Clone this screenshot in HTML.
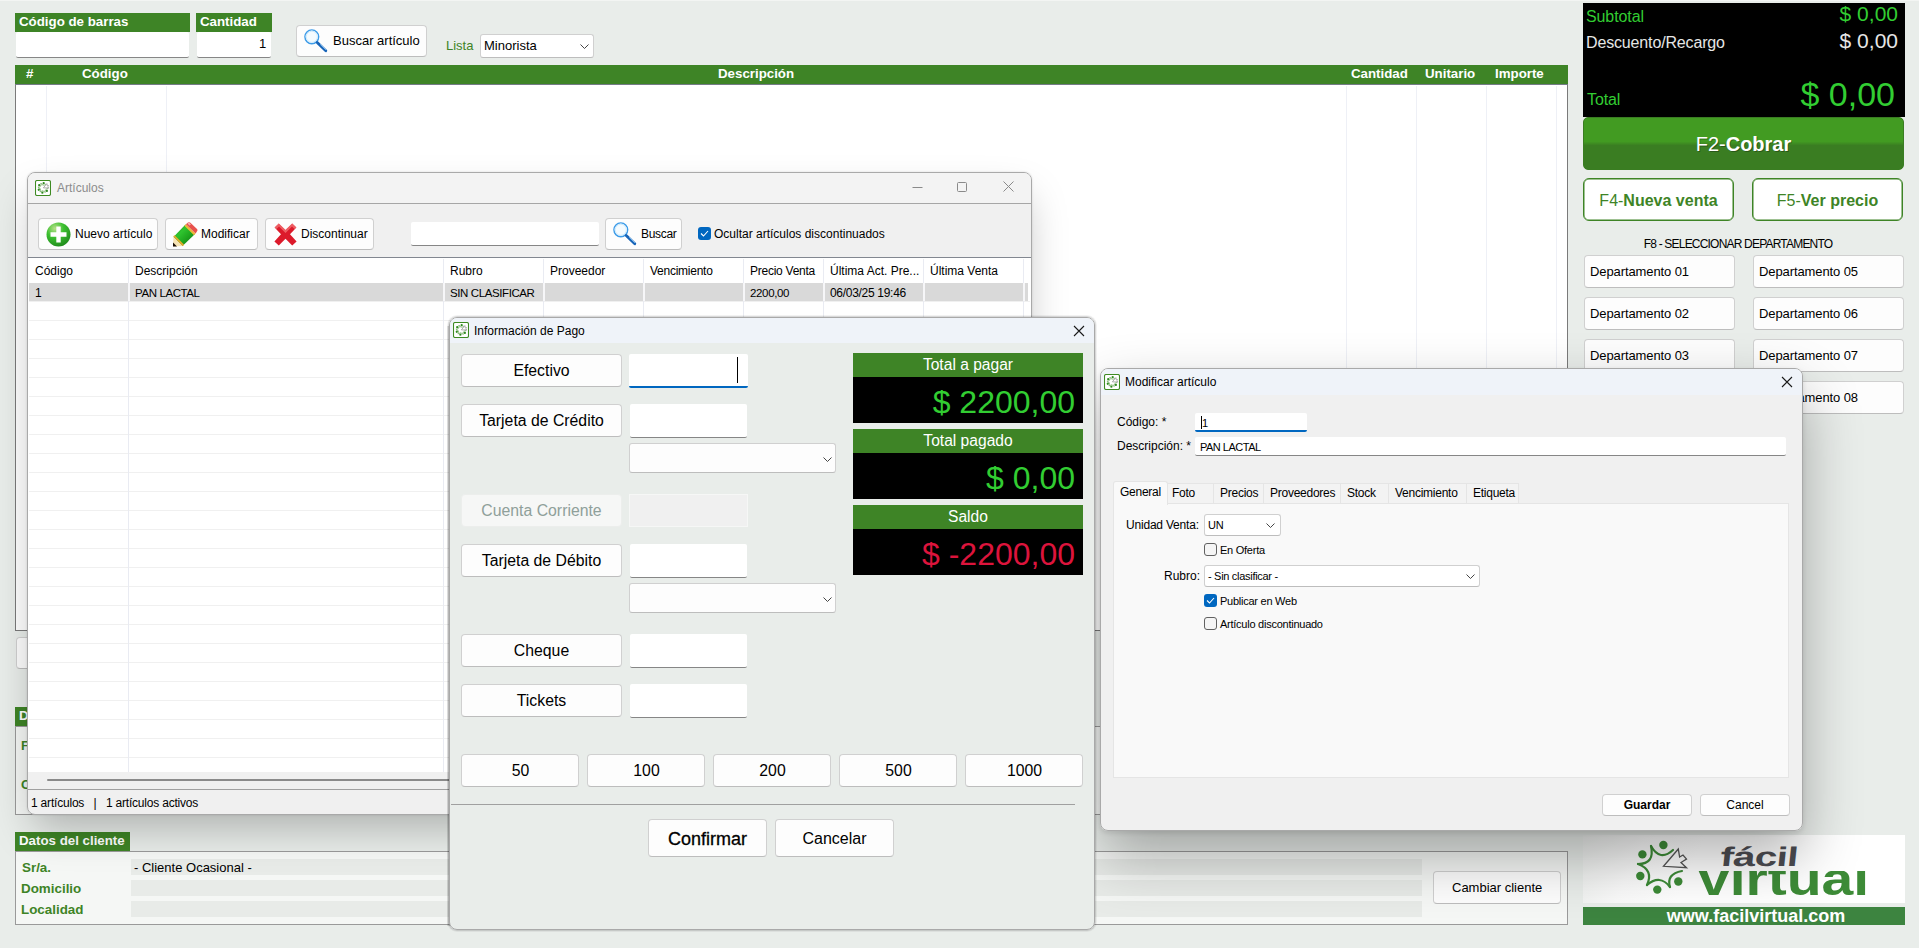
<!DOCTYPE html>
<html lang="es">
<head>
<meta charset="utf-8">
<title>Fácil Virtual - Punto de venta</title>
<style>
*{box-sizing:border-box;margin:0;padding:0}
html,body{width:1919px;height:948px;overflow:hidden}
body{position:relative;background:#e9edea;font-family:"Liberation Sans",Arial,sans-serif;font-size:12px;color:#000}
.abs{position:absolute}
.g{background:#3e8426;color:#fff;font-weight:bold}
.lbl{position:absolute;background:#3e8426;color:#fff;font-weight:bold;font-size:13.3px;line-height:17px;padding-left:4px;white-space:nowrap}
.inp{position:absolute;background:#fff;border-bottom:1px solid #868686;border-radius:2px}
.btn{position:absolute;background:#fdfdfd;border:1px solid #d0d0d0;border-bottom-color:#bdbdbd;border-radius:4px;white-space:nowrap;text-align:center}
.t{position:absolute;white-space:nowrap}
.win{position:absolute;border:1px solid #a9a9a9;border-radius:8px;overflow:hidden}
.shadow{position:absolute;border-radius:8px}
.vline{position:absolute;width:1px;background:#eef0f6}
.chev{position:absolute;width:9px;height:5px}
</style>
</head>
<body>
<!-- ================= MAIN WINDOW ================= -->
<div class="abs" style="left:0;top:0;width:1919px;height:1px;background:#f3f5f3"></div>

<div class="lbl" style="left:15px;top:13px;width:175px;height:19px">Código de barras</div>
<div class="inp" style="left:16px;top:32px;width:173px;height:26px"></div>
<div class="lbl" style="left:196px;top:13px;width:76px;height:19px">Cantidad</div>
<div class="inp" style="left:197px;top:32px;width:74px;height:26px"></div>
<div class="t" style="left:259px;top:36px;font-size:13px;line-height:15px">1</div>

<div class="btn" style="left:296px;top:25px;width:131px;height:32px"></div>
<svg class="abs" style="left:303px;top:28px" width="26" height="26" viewBox="0 0 26 26"><circle cx="8.8" cy="8.8" r="6.9" fill="#f4fbff" stroke="#3c9be8" stroke-width="1.4"/><circle cx="8.8" cy="8.8" r="5.6" fill="none" stroke="#cdeafc" stroke-width="1"/><path d="M14.2 14.4 L22.8 22.8" stroke="#1764b8" stroke-width="2.8" stroke-linecap="round"/><path d="M17.5 16.6 L22.6 21.6" stroke="#8cc4f2" stroke-width="0.9" stroke-linecap="round"/></svg>
<div class="t" style="left:333px;top:33px;font-size:13px;line-height:16px">Buscar artículo</div>

<div class="t" style="left:446px;top:38px;font-size:13px;line-height:16px;color:#3e8426">Lista</div>
<div class="btn" style="left:480px;top:34px;width:114px;height:24px;border-radius:3px;background:#fff"></div>
<div class="t" style="left:484px;top:38px;font-size:13px;line-height:16px">Minorista</div>
<svg class="chev" style="left:580px;top:44px" viewBox="0 0 9 5"><path d="M0.5 0.5 L4.5 4.5 L8.5 0.5" fill="none" stroke="#444" stroke-width="1"/></svg>

<!-- sales grid -->
<div class="abs" style="left:15px;top:65px;width:1553px;height:566px;background:#fff;border:1px solid #7a7a7a"></div>
<div class="abs g" style="left:15px;top:65px;width:1553px;height:20px;font-size:13.3px;line-height:18px">
  <span class="t" style="left:11px;top:0">#</span>
  <span class="t" style="left:67px;top:0">Código</span>
  <span class="t" style="left:703px;top:0">Descripción</span>
  <span class="t" style="left:1336px;top:0">Cantidad</span>
  <span class="t" style="left:1410px;top:0">Unitario</span>
  <span class="t" style="left:1480px;top:0">Importe</span>
</div>
<div class="abs" style="left:15px;top:84px;width:1553px;height:1px;background:#747b86"></div>
<div class="vline" style="left:46px;top:86px;height:544px"></div>
<div class="vline" style="left:166px;top:86px;height:544px"></div>
<div class="vline" style="left:1346px;top:86px;height:544px"></div>
<div class="vline" style="left:1416px;top:86px;height:544px"></div>
<div class="vline" style="left:1486px;top:86px;height:544px"></div>
<div class="vline" style="left:1556px;top:86px;height:544px"></div>

<!-- hidden-behind bits at left -->
<div class="btn" style="left:16px;top:637px;width:120px;height:32px"></div>
<div class="lbl" style="left:15px;top:707px;width:130px;height:19px">Datos</div>
<div class="abs" style="left:15px;top:726px;width:1553px;height:89px;background:#f5f7f5;border:1px solid #9a9a9a"></div>
<div class="t" style="left:21px;top:738px;font-size:13px;font-weight:bold;color:#3e8426">Fecha</div>
<div class="t" style="left:21px;top:777px;font-size:13px;font-weight:bold;color:#3e8426">Cajero</div>

<!-- Datos del cliente -->
<div class="lbl" style="left:15px;top:832px;width:115px;height:19px">Datos del cliente</div>
<div class="abs" style="left:15px;top:851px;width:1553px;height:74px;background:#f5f7f5;border:1px solid #9a9a9a"></div>
<div class="abs" style="left:131px;top:859px;width:1291px;height:16px;background:#e8ebe8"></div>
<div class="abs" style="left:131px;top:880px;width:1291px;height:16px;background:#e8ebe8"></div>
<div class="abs" style="left:131px;top:901px;width:1291px;height:16px;background:#e8ebe8"></div>
<div class="t" style="left:22px;top:860px;font-size:13.4px;font-weight:bold;color:#3e8426;line-height:16px">Sr/a.</div>
<div class="t" style="left:21px;top:881px;font-size:13.4px;font-weight:bold;color:#3e8426;line-height:16px">Domicilio</div>
<div class="t" style="left:21px;top:902px;font-size:13.4px;font-weight:bold;color:#3e8426;line-height:16px">Localidad</div>
<div class="t" style="left:134px;top:860px;font-size:13px;line-height:16px">- Cliente Ocasional -</div>
<div class="btn" style="left:1433px;top:871px;width:128px;height:33px"></div>
<div class="t" style="left:1452px;top:880px;font-size:13px;line-height:16px">Cambiar cliente</div>

<!-- RIGHT COLUMN -->
<div class="abs" style="left:1583px;top:3px;width:322px;height:114px;background:#000"></div>
<div class="t" style="left:1586px;top:8px;font-size:16px;line-height:18px;color:#32cd32;letter-spacing:-0.1px">Subtotal</div>
<div class="t" style="right:21px;top:3px;font-size:21px;line-height:22px;color:#32cd32">$ 0,00</div>
<div class="t" style="left:1586px;top:34px;font-size:16px;line-height:18px;color:#e6e6e6;letter-spacing:-0.15px">Descuento/Recargo</div>
<div class="t" style="right:21px;top:30px;font-size:21px;line-height:22px;color:#e6e6e6">$ 0,00</div>
<div class="t" style="left:1587px;top:91px;font-size:16px;line-height:18px;color:#32cd32;letter-spacing:-0.1px">Total</div>
<div class="t" style="right:24px;top:76px;font-size:34px;line-height:36px;color:#32cd32">$ 0,00</div>

<div class="abs" style="left:1583px;top:117px;width:321px;height:53px;border-radius:5px;background:linear-gradient(#429b22 0,#429b22 46%,#3a7d22 54%,#3a7d22 100%);border:1px solid #3a7d22"></div>
<div class="t" style="left:1583px;top:132px;width:321px;text-align:center;font-size:20px;line-height:24px;color:#fff;text-shadow:1px 1px 0 rgba(0,0,0,.3)">F2-<b>Cobrar</b></div>

<div class="abs" style="left:1583px;top:178px;width:151px;height:43px;border-radius:6px;background:#fff;border:1px solid #3e8426;box-shadow:inset 0 0 0 .5px #3e8426"></div>
<div class="t" style="left:1583px;top:191px;width:151px;text-align:center;font-size:16px;line-height:20px;color:#3e8426">F4-<b>Nueva venta</b></div>
<div class="abs" style="left:1752px;top:178px;width:151px;height:43px;border-radius:6px;background:#fff;border:1px solid #3e8426;box-shadow:inset 0 0 0 .5px #3e8426"></div>
<div class="t" style="left:1752px;top:191px;width:151px;text-align:center;font-size:16px;line-height:20px;color:#3e8426">F5-<b>Ver precio</b></div>

<div class="t" style="left:1583px;top:237px;width:310px;text-align:center;font-size:12px;line-height:14px;letter-spacing:-0.8px">F8 - SELECCIONAR DEPARTAMENTO</div>

<div class="btn" style="left:1584px;top:255px;width:151px;height:33px"></div><div class="t" style="left:1590px;top:264px;font-size:13px;line-height:16px;letter-spacing:-0.1px">Departamento 01</div>
<div class="btn" style="left:1753px;top:255px;width:151px;height:33px"></div><div class="t" style="left:1759px;top:264px;font-size:13px;line-height:16px;letter-spacing:-0.1px">Departamento 05</div>
<div class="btn" style="left:1584px;top:297px;width:151px;height:33px"></div><div class="t" style="left:1590px;top:306px;font-size:13px;line-height:16px;letter-spacing:-0.1px">Departamento 02</div>
<div class="btn" style="left:1753px;top:297px;width:151px;height:33px"></div><div class="t" style="left:1759px;top:306px;font-size:13px;line-height:16px;letter-spacing:-0.1px">Departamento 06</div>
<div class="btn" style="left:1584px;top:339px;width:151px;height:33px"></div><div class="t" style="left:1590px;top:348px;font-size:13px;line-height:16px;letter-spacing:-0.1px">Departamento 03</div>
<div class="btn" style="left:1753px;top:339px;width:151px;height:33px"></div><div class="t" style="left:1759px;top:348px;font-size:13px;line-height:16px;letter-spacing:-0.1px">Departamento 07</div>
<div class="btn" style="left:1584px;top:381px;width:151px;height:33px"></div><div class="t" style="left:1590px;top:390px;font-size:13px;line-height:16px;letter-spacing:-0.1px">Departamento 04</div>
<div class="btn" style="left:1753px;top:381px;width:151px;height:33px"></div><div class="t" style="left:1759px;top:390px;font-size:13px;line-height:16px;letter-spacing:-0.1px">Departamento 08</div>
<!-- logo -->
<div class="abs" style="left:1583px;top:835px;width:322px;height:68px;background:linear-gradient(115deg,#eceeec 0,#fafafa 18%,#fff 35%)"></div>
<svg class="abs" style="left:1630px;top:838px" width="62" height="60" viewBox="0 0 62 60">
 <g fill="#3d8b37"><circle cx="33.4" cy="7" r="4.2"/><circle cx="12.4" cy="16.4" r="4.2"/><circle cx="10.3" cy="38" r="4.2"/><circle cx="27.3" cy="51.6" r="4.2"/><circle cx="48.3" cy="43.5" r="4.2"/></g>
 <g fill="none" stroke="#3d8b37" stroke-width="2.2" stroke-linecap="round" stroke-linejoin="round">
  <path d="M21 8 Q30 24 43 12"/><path d="M21 8 Q25 26 8 26"/><path d="M8 26 Q24 32 17 47"/><path d="M17 47 Q30 36 40 49"/><path d="M40 49 Q36 36 52 33"/>
 </g>
 <path d="M48.3 11 L33.5 28.3 L56.5 29.7 L51 24.5 L56.5 21 L53 17 L49.6 19 Z" fill="#fff" stroke="#555" stroke-width="1.3" stroke-linejoin="miter"/>
</svg>
<div class="t" style="left:1722px;top:843px;font-size:27px;line-height:28px;font-weight:bold;color:#4d4d52;transform-origin:0 0;transform:scaleX(1.5) skewX(-4deg);letter-spacing:-0.5px">fácil</div>
<div class="abs" style="left:1698px;top:871px;width:175px;height:25px;overflow:hidden"><div class="t" style="left:0;top:-18px;font-size:46px;line-height:52px;font-weight:bold;color:#3d8b37;transform-origin:0 0;transform:scaleX(1.24)">virtual</div></div>
<div class="abs" style="left:1583px;top:907px;width:322px;height:18px;background:#3d8440"></div>
<div class="t" style="left:1595px;top:907px;width:322px;text-align:center;font-size:18px;font-weight:bold;line-height:19px;color:#fff">www.facilvirtual.com</div>


<!-- ================= ARTICULOS WINDOW ================= -->
<div class="shadow" style="left:27px;top:172px;width:1005px;height:643px;box-shadow:0 20px 40px -6px rgba(0,0,0,.25),0 0 2px rgba(0,0,0,.16)"></div>
<div class="win" style="left:27px;top:172px;width:1005px;height:643px;background:#f0f0f0">
  <div class="abs" style="left:0;top:0;width:1003px;height:31px;background:#f3f3f3;border-bottom:1px solid #a6a6a6"></div>
  <svg class="abs" style="left:7px;top:7px" width="16" height="16" viewBox="0 0 16 16"><rect x="0.5" y="0.5" width="15" height="15" rx="1.6" fill="#fff" stroke="#3e8a22" stroke-width="1.1"/><g transform="translate(1.6,1.7) scale(0.212)"><g fill="#2f8a1f"><circle cx="33.4" cy="7" r="5.4"/><circle cx="12.4" cy="16.4" r="5.4"/><circle cx="10.3" cy="38" r="5.4"/><circle cx="27.3" cy="51.6" r="5.4"/><circle cx="48.3" cy="43.5" r="5.4"/></g><g fill="none" stroke="#4f9a3a" stroke-width="4" stroke-linecap="round" opacity=".75"><path d="M21 8 Q30 24 43 12"/><path d="M21 8 Q25 26 8 26"/><path d="M8 26 Q24 32 17 47"/><path d="M17 47 Q30 36 40 49"/><path d="M40 49 Q36 36 52 33"/></g><path d="M48.3 9 L32 29 L58 30 L52 24.5 L57 20 L53 16 L49.6 18 Z" fill="#fff" stroke="#8c8c8c" stroke-width="3.4"/></g></svg>
  <div class="t" style="left:29px;top:8px;font-size:12px;line-height:14px;color:#8c8c8c">Artículos</div>
  <svg class="abs" style="left:884px;top:8px" width="104" height="12" viewBox="0 0 104 12" fill="none" stroke="#8a8a8a" stroke-width="1"><path d="M0.5 6.5 H10.5"/><rect x="45.5" y="1.5" width="9" height="9" rx="1"/><path d="M91.5 0.5 L101.5 10.5 M101.5 0.5 L91.5 10.5"/></svg>

  <!-- toolbar -->
  <div class="btn" style="left:10px;top:45px;width:120px;height:32px"></div>
  <svg class="abs" style="left:18px;top:49px" width="25" height="25" viewBox="0 0 25 25"><defs><radialGradient id="pg" cx="35%" cy="25%" r="80%"><stop offset="0" stop-color="#b8e08a"/><stop offset=".45" stop-color="#3cc030"/><stop offset="1" stop-color="#1f8a1c"/></radialGradient></defs><circle cx="12.5" cy="12.5" r="12" fill="url(#pg)"/><path d="M10.3 4.5h4.4v5.8h5.8v4.4h-5.8v5.8h-4.4v-5.8H4.5v-4.4h5.8z" fill="#fff"/></svg>
  <div class="t" style="left:47px;top:54px;line-height:14px">Nuevo artículo</div>

  <div class="btn" style="left:137px;top:45px;width:93px;height:32px"></div>
  <svg class="abs" style="left:145px;top:49px" width="25" height="25" viewBox="0 0 25 25"><defs><linearGradient id="pb" x1="0" y1="0" x2="1" y2="1"><stop offset="0" stop-color="#0d7a10"/><stop offset=".35" stop-color="#2fc42f"/><stop offset=".6" stop-color="#1fa81f"/><stop offset="1" stop-color="#0b6a0e"/></linearGradient></defs><path d="M0.5 15 L12.5 2.6 L22 12 L9.5 24 Z" fill="url(#pb)"/><path d="M0.5 15 L9.5 24 L0 24.6 Z" fill="#f6e3b4"/><path d="M0.2 14.2 L1.6 13.2 L11 22.6 L9.8 24.2 Z" fill="#e3a92c"/><path d="M0 24.6 L0 20.6 L4 24.4 Z" fill="#1a0d04"/><path d="M11.3 3.8 L12.9 2.2 L22.6 11.6 L21 13.2 Z" fill="#eab73a"/><path d="M12.9 2.2 L15 0.5 Q16.2 -0.3 17.4 0.7 L24 7 Q24.8 8 24.2 9 L22.6 11.6 Z" fill="#e8514c"/><path d="M14.5 1.6 L16 0.6 L18 2.4 L16.4 3.4Z" fill="#f2b0b0"/></svg>
  <div class="t" style="left:173px;top:54px;line-height:14px">Modificar</div>

  <div class="btn" style="left:237px;top:45px;width:109px;height:32px"></div>
  <svg class="abs" style="left:246px;top:50px" width="23" height="23" viewBox="0 0 23 23"><path d="M0.6 4.4 L4.8 0.4 L11.5 7 L18.2 0.4 L22.4 4.4 L16 11.3 L22.6 18.4 L18.2 22.6 L11.5 15.8 L4.8 22.6 L0.4 18.4 L7 11.3 Z" fill="#dc1a2b"/><path d="M0.6 4.4 L4.8 0.4 L11.5 7 L18.2 0.4 L22.4 4.4 L20.5 6 L18 3.4 L11.5 10 L5 3.4 L2.6 6Z" fill="#f57a7a" opacity=".7"/></svg>
  <div class="t" style="left:273px;top:54px;line-height:14px">Discontinuar</div>

  <div class="inp" style="left:383px;top:49px;width:188px;height:24px"></div>
  <div class="btn" style="left:577px;top:45px;width:77px;height:32px"></div>
  <svg class="abs" style="left:584px;top:48px" width="26" height="26" viewBox="0 0 26 26"><circle cx="8.8" cy="8.8" r="6.9" fill="#f4fbff" stroke="#3c9be8" stroke-width="1.4"/><circle cx="8.8" cy="8.8" r="5.6" fill="none" stroke="#cdeafc" stroke-width="1"/><path d="M14.2 14.4 L22.8 22.8" stroke="#1764b8" stroke-width="2.8" stroke-linecap="round"/><path d="M17.5 16.6 L22.6 21.6" stroke="#8cc4f2" stroke-width="0.9" stroke-linecap="round"/></svg>
  <div class="t" style="left:613px;top:54px;line-height:14px;letter-spacing:-0.3px">Buscar</div>
  <div class="abs" style="left:670px;top:54px;width:13px;height:13px;border-radius:3px;background:#0067c0"></div>
  <svg class="abs" style="left:672px;top:57px" width="9" height="7" viewBox="0 0 9 7"><path d="M1 3.5 L3.5 6 L8 1" fill="none" stroke="#fff" stroke-width="1.1"/></svg>
  <div class="t" style="left:686px;top:54px;line-height:14px">Ocultar artículos discontinuados</div>

  <!-- grid -->
  <div class="abs" id="agrid" style="left:0;top:84px;width:1003px;height:532px;background:#fff;border-top:1px solid #828790">
    <div class="abs" style="left:1px;top:25px;width:999px;height:18px;background:#d9d9d9"></div>
    <div class="abs" style="left:1px;top:43px;width:1001px;height:1px;background:#f0f0f0"></div>
    <div class="abs" style="left:1px;top:62px;width:1001px;height:1px;background:#f0f0f0"></div>
    <div class="abs" style="left:1px;top:81px;width:1001px;height:1px;background:#f0f0f0"></div>
    <div class="abs" style="left:1px;top:100px;width:1001px;height:1px;background:#f0f0f0"></div>
    <div class="abs" style="left:1px;top:119px;width:1001px;height:1px;background:#f0f0f0"></div>
    <div class="abs" style="left:1px;top:138px;width:1001px;height:1px;background:#f0f0f0"></div>
    <div class="abs" style="left:1px;top:157px;width:1001px;height:1px;background:#f0f0f0"></div>
    <div class="abs" style="left:1px;top:176px;width:1001px;height:1px;background:#f0f0f0"></div>
    <div class="abs" style="left:1px;top:195px;width:1001px;height:1px;background:#f0f0f0"></div>
    <div class="abs" style="left:1px;top:214px;width:1001px;height:1px;background:#f0f0f0"></div>
    <div class="abs" style="left:1px;top:233px;width:1001px;height:1px;background:#f0f0f0"></div>
    <div class="abs" style="left:1px;top:252px;width:1001px;height:1px;background:#f0f0f0"></div>
    <div class="abs" style="left:1px;top:271px;width:1001px;height:1px;background:#f0f0f0"></div>
    <div class="abs" style="left:1px;top:290px;width:1001px;height:1px;background:#f0f0f0"></div>
    <div class="abs" style="left:1px;top:309px;width:1001px;height:1px;background:#f0f0f0"></div>
    <div class="abs" style="left:1px;top:328px;width:1001px;height:1px;background:#f0f0f0"></div>
    <div class="abs" style="left:1px;top:347px;width:1001px;height:1px;background:#f0f0f0"></div>
    <div class="abs" style="left:1px;top:366px;width:1001px;height:1px;background:#f0f0f0"></div>
    <div class="abs" style="left:1px;top:385px;width:1001px;height:1px;background:#f0f0f0"></div>
    <div class="abs" style="left:1px;top:404px;width:1001px;height:1px;background:#f0f0f0"></div>
    <div class="abs" style="left:1px;top:423px;width:1001px;height:1px;background:#f0f0f0"></div>
    <div class="abs" style="left:1px;top:442px;width:1001px;height:1px;background:#f0f0f0"></div>
    <div class="abs" style="left:1px;top:461px;width:1001px;height:1px;background:#f0f0f0"></div>
    <div class="abs" style="left:1px;top:480px;width:1001px;height:1px;background:#f0f0f0"></div>
    <div class="abs" style="left:1px;top:499px;width:1001px;height:1px;background:#f0f0f0"></div>
    <div class="abs" style="left:1px;top:518px;width:1001px;height:1px;background:#f0f0f0"></div>
    <div class="abs" style="left:1px;top:537px;width:1001px;height:1px;background:#f0f0f0"></div>
    <div class="abs" style="left:100px;top:1px;width:1px;height:513px;background:#e9ebf2"></div>
    <div class="abs" style="left:415px;top:1px;width:1px;height:513px;background:#e9ebf2"></div>
    <div class="abs" style="left:515px;top:1px;width:1px;height:513px;background:#e9ebf2"></div>
    <div class="abs" style="left:615px;top:1px;width:1px;height:513px;background:#e9ebf2"></div>
    <div class="abs" style="left:715px;top:1px;width:1px;height:513px;background:#e9ebf2"></div>
    <div class="abs" style="left:795px;top:1px;width:1px;height:513px;background:#e9ebf2"></div>
    <div class="abs" style="left:895px;top:1px;width:1px;height:513px;background:#e9ebf2"></div>
    <div class="abs" style="left:995px;top:1px;width:1px;height:513px;background:#e9ebf2"></div>
    <div class="abs" style="left:100px;top:25px;width:2px;height:18px;background:#f6f6f8"></div><div class="abs" style="left:415px;top:25px;width:2px;height:18px;background:#f6f6f8"></div><div class="abs" style="left:515px;top:25px;width:2px;height:18px;background:#f6f6f8"></div><div class="abs" style="left:615px;top:25px;width:2px;height:18px;background:#f6f6f8"></div><div class="abs" style="left:715px;top:25px;width:2px;height:18px;background:#f6f6f8"></div><div class="abs" style="left:795px;top:25px;width:2px;height:18px;background:#f6f6f8"></div><div class="abs" style="left:895px;top:25px;width:2px;height:18px;background:#f6f6f8"></div><div class="abs" style="left:995px;top:25px;width:2px;height:18px;background:#f6f6f8"></div>
    <div class="t" style="left:7px;top:6px;line-height:14px">Código</div>
    <div class="t" style="left:107px;top:6px;line-height:14px">Descripción</div>
    <div class="t" style="left:422px;top:6px;line-height:14px">Rubro</div>
    <div class="t" style="left:522px;top:6px;line-height:14px">Proveedor</div>
    <div class="t" style="left:622px;top:6px;line-height:14px;letter-spacing:-0.25px">Vencimiento</div>
    <div class="t" style="left:722px;top:6px;line-height:14px;letter-spacing:-0.25px">Precio Venta</div>
    <div class="t" style="left:802px;top:6px;line-height:14px">Última Act. Pre...</div>
    <div class="t" style="left:902px;top:6px;line-height:14px">Última Venta</div>
    <div class="t" style="left:7px;top:28px;line-height:14px">1</div>
    <div class="t" style="left:107px;top:28px;line-height:14px;font-size:11.5px;letter-spacing:-0.4px">PAN LACTAL</div>
    <div class="t" style="left:422px;top:28px;line-height:14px;font-size:11.5px;letter-spacing:-0.4px">SIN CLASIFICAR</div>
    <div class="t" style="left:722px;top:28px;line-height:14px;font-size:11.5px;letter-spacing:-0.35px">2200,00</div>
    <div class="t" style="left:802px;top:28px;line-height:14px;letter-spacing:-0.3px">06/03/25 19:46</div>
  </div>
  <div class="abs" style="left:0;top:599px;width:1003px;height:18px;background:#f0f0f0"></div>
  <div class="abs" style="left:19px;top:606px;width:984px;height:2px;background:#8a8a8a;border-radius:1px"></div>
  <div class="abs" style="left:0;top:616px;width:1003px;height:1px;background:#a0a0a0"></div>
  <div class="t" style="left:3px;top:623px;line-height:14px;letter-spacing:-0.2px">1 artículos&nbsp;&nbsp;&nbsp;|&nbsp;&nbsp;&nbsp;1 artículos activos</div>
</div>

<!-- ================= MODIFICAR ARTICULO WINDOW ================= -->
<div class="shadow" style="left:449px;top:317px;width:646px;height:613px;box-shadow:0 0 0 1px rgba(0,0,0,.10),0 0 0 2px rgba(0,0,0,.05)"></div>
<div class="abs" style="left:447px;top:326px;width:3px;height:600px;background:linear-gradient(to right,rgba(0,0,0,.06),rgba(0,0,0,.26))"></div>
<div class="shadow" style="left:1100px;top:368px;width:703px;height:463px;box-shadow:0 26px 58px rgba(0,0,0,.31),0 2px 5px rgba(0,0,0,.10)"></div>
<div class="win" style="left:1100px;top:368px;width:703px;height:463px;background:#f0f0f0">
  <div class="abs" style="left:0;top:0;width:701px;height:26px;background:#eff3f9"></div>
  <svg class="abs" style="left:3px;top:5px" width="16" height="16" viewBox="0 0 16 16"><rect x="0.5" y="0.5" width="15" height="15" rx="1.6" fill="#fff" stroke="#3e8a22" stroke-width="1.1"/><g transform="translate(1.6,1.7) scale(0.212)"><g fill="#2f8a1f"><circle cx="33.4" cy="7" r="5.4"/><circle cx="12.4" cy="16.4" r="5.4"/><circle cx="10.3" cy="38" r="5.4"/><circle cx="27.3" cy="51.6" r="5.4"/><circle cx="48.3" cy="43.5" r="5.4"/></g><g fill="none" stroke="#4f9a3a" stroke-width="4" stroke-linecap="round" opacity=".75"><path d="M21 8 Q30 24 43 12"/><path d="M21 8 Q25 26 8 26"/><path d="M8 26 Q24 32 17 47"/><path d="M17 47 Q30 36 40 49"/><path d="M40 49 Q36 36 52 33"/></g><path d="M48.3 9 L32 29 L58 30 L52 24.5 L57 20 L53 16 L49.6 18 Z" fill="#fff" stroke="#8c8c8c" stroke-width="3.4"/></g></svg>
  <div class="t" style="left:24px;top:6px;line-height:14px">Modificar artículo</div>
  <svg class="abs" style="left:680px;top:7px" width="12" height="12" viewBox="0 0 12 12" fill="none" stroke="#1a1a1a" stroke-width="1.1"><path d="M1 1 L11 11 M11 1 L1 11"/></svg>

  <div class="t" style="left:16px;top:46px;line-height:14px">Código: *</div>
  <div class="abs" style="left:94px;top:44px;width:112px;height:19px;background:#fff;border-bottom:2px solid #0067c0;border-radius:2px"></div>
  <div class="abs" style="left:100px;top:47px;width:1px;height:13px;background:#000"></div>
  <div class="t" style="left:101px;top:47px;line-height:14px;font-size:11px">1</div>
  <div class="t" style="left:16px;top:70px;line-height:14px">Descripción: *</div>
  <div class="inp" style="left:94px;top:68px;width:591px;height:19px"></div>
  <div class="t" style="left:99px;top:71px;line-height:14px;font-size:11px;letter-spacing:-0.5px">PAN LACTAL</div>

  <!-- tabs -->
  <div class="abs" style="left:12px;top:134px;width:676px;height:275px;background:#f9f9f9;border:1px solid #e5e5e5"></div>
  <div class="abs" style="left:66px;top:114px;width:352px;height:20px;background:#f3f3f3;border:1px solid #e5e5e5;border-bottom:none"></div>
  <div class="abs" style="left:112px;top:115px;width:1px;height:19px;background:#e5e5e5"></div><div class="abs" style="left:162px;top:115px;width:1px;height:19px;background:#e5e5e5"></div><div class="abs" style="left:239px;top:115px;width:1px;height:19px;background:#e5e5e5"></div><div class="abs" style="left:287px;top:115px;width:1px;height:19px;background:#e5e5e5"></div><div class="abs" style="left:365px;top:115px;width:1px;height:19px;background:#e5e5e5"></div>
  <div class="abs" style="left:12px;top:112px;width:55px;height:24px;background:#f9f9f9;border:1px solid #e5e5e5;border-bottom:none;border-radius:3px 3px 0 0"></div>
  <div class="t" style="left:19px;top:116px;line-height:14px;letter-spacing:-0.25px">General</div>
  <div class="t" style="left:71px;top:117px;line-height:14px;letter-spacing:-0.25px">Foto</div>
  <div class="t" style="left:119px;top:117px;line-height:14px;letter-spacing:-0.25px">Precios</div>
  <div class="t" style="left:169px;top:117px;line-height:14px;letter-spacing:-0.25px">Proveedores</div>
  <div class="t" style="left:246px;top:117px;line-height:14px;letter-spacing:-0.25px">Stock</div>
  <div class="t" style="left:294px;top:117px;line-height:14px;letter-spacing:-0.25px">Vencimiento</div>
  <div class="t" style="left:372px;top:117px;line-height:14px;letter-spacing:-0.25px">Etiqueta</div>

  <div class="t" style="left:25px;top:149px;line-height:14px;letter-spacing:-0.2px">Unidad Venta:</div>
  <div class="btn" style="left:103px;top:145px;width:77px;height:22px;background:#fff;border-radius:3px"></div>
  <div class="t" style="left:107px;top:149px;line-height:14px;font-size:11px;letter-spacing:-0.3px">UN</div>
  <svg class="chev" style="left:165px;top:154px" viewBox="0 0 9 5"><path d="M0.5 0.5 L4.5 4.5 L8.5 0.5" fill="none" stroke="#444" stroke-width="1"/></svg>

  <div class="abs" style="left:103px;top:174px;width:13px;height:13px;border:1px solid #616161;border-radius:3px;background:#f5f5f5"></div>
  <div class="t" style="left:119px;top:174px;line-height:14px;font-size:11px;letter-spacing:-0.25px">En Oferta</div>

  <div class="t" style="left:63px;top:200px;line-height:14px">Rubro:</div>
  <div class="btn" style="left:103px;top:196px;width:276px;height:22px;background:#fff;border-radius:3px"></div>
  <div class="t" style="left:107px;top:200px;line-height:14px;font-size:11px;letter-spacing:-0.3px">- Sin clasificar -</div>
  <svg class="chev" style="left:365px;top:205px" viewBox="0 0 9 5"><path d="M0.5 0.5 L4.5 4.5 L8.5 0.5" fill="none" stroke="#444" stroke-width="1"/></svg>

  <div class="abs" style="left:103px;top:225px;width:13px;height:13px;border-radius:3px;background:#0067c0"></div>
  <svg class="abs" style="left:105px;top:228px" width="9" height="7" viewBox="0 0 9 7"><path d="M1 3.5 L3.5 6 L8 1" fill="none" stroke="#fff" stroke-width="1.1"/></svg>
  <div class="t" style="left:119px;top:225px;line-height:14px;font-size:11px;letter-spacing:-0.25px">Publicar en Web</div>

  <div class="abs" style="left:103px;top:248px;width:13px;height:13px;border:1px solid #616161;border-radius:3px;background:#f5f5f5"></div>
  <div class="t" style="left:119px;top:248px;line-height:14px;font-size:11px;letter-spacing:-0.25px">Artículo discontinuado</div>

  <div class="btn" style="left:501px;top:425px;width:90px;height:22px"></div>
  <div class="t" style="left:501px;top:429px;width:90px;text-align:center;line-height:14px;font-weight:bold">Guardar</div>
  <div class="btn" style="left:599px;top:425px;width:90px;height:22px"></div>
  <div class="t" style="left:599px;top:429px;width:90px;text-align:center;line-height:14px">Cancel</div>
</div>

<!-- ================= INFORMACION DE PAGO WINDOW ================= -->

<div class="win" style="left:449px;top:317px;width:646px;height:613px;background:#e9edea">
  <div class="abs" style="left:0;top:0;width:644px;height:25px;background:#eff3f9"></div>
  <svg class="abs" style="left:3px;top:4px" width="16" height="16" viewBox="0 0 16 16"><rect x="0.5" y="0.5" width="15" height="15" rx="1.6" fill="#fff" stroke="#3e8a22" stroke-width="1.1"/><g transform="translate(1.6,1.7) scale(0.212)"><g fill="#2f8a1f"><circle cx="33.4" cy="7" r="5.4"/><circle cx="12.4" cy="16.4" r="5.4"/><circle cx="10.3" cy="38" r="5.4"/><circle cx="27.3" cy="51.6" r="5.4"/><circle cx="48.3" cy="43.5" r="5.4"/></g><g fill="none" stroke="#4f9a3a" stroke-width="4" stroke-linecap="round" opacity=".75"><path d="M21 8 Q30 24 43 12"/><path d="M21 8 Q25 26 8 26"/><path d="M8 26 Q24 32 17 47"/><path d="M17 47 Q30 36 40 49"/><path d="M40 49 Q36 36 52 33"/></g><path d="M48.3 9 L32 29 L58 30 L52 24.5 L57 20 L53 16 L49.6 18 Z" fill="#fff" stroke="#8c8c8c" stroke-width="3.4"/></g></svg>
  <div class="t" style="left:24px;top:6px;line-height:14px">Información de Pago</div>
  <svg class="abs" style="left:623px;top:7px" width="12" height="12" viewBox="0 0 12 12" fill="none" stroke="#1a1a1a" stroke-width="1.1"><path d="M1 1 L11 11 M11 1 L1 11"/></svg>
  <div class="btn" style="left:11px;top:36px;width:161px;height:33px"></div><div class="t" style="left:11px;top:44px;width:161px;text-align:center;font-size:15.8px;line-height:18px">Efectivo</div>
  <div class="btn" style="left:11px;top:86px;width:161px;height:33px"></div><div class="t" style="left:11px;top:94px;width:161px;text-align:center;font-size:15.8px;line-height:18px">Tarjeta de Crédito</div>
  <div class="btn" style="left:11px;top:176px;width:161px;height:33px;background:#f6f7f6;border-color:#eceeec"></div><div class="t" style="left:11px;top:184px;width:161px;text-align:center;font-size:15.8px;line-height:18px;color:#8fa09a">Cuenta Corriente</div>
  <div class="btn" style="left:11px;top:226px;width:161px;height:33px"></div><div class="t" style="left:11px;top:234px;width:161px;text-align:center;font-size:15.8px;line-height:18px">Tarjeta de Débito</div>
  <div class="btn" style="left:11px;top:316px;width:161px;height:33px"></div><div class="t" style="left:11px;top:324px;width:161px;text-align:center;font-size:15.8px;line-height:18px">Cheque</div>
  <div class="btn" style="left:11px;top:366px;width:161px;height:33px"></div><div class="t" style="left:11px;top:374px;width:161px;text-align:center;font-size:15.8px;line-height:18px">Tickets</div>
  <div class="abs" style="left:179px;top:36px;width:119px;height:34px;background:#fff;border-bottom:2px solid #0067c0;border-radius:2px"></div>
  <div class="abs" style="left:287px;top:39px;width:1px;height:26px;background:#000"></div>
  <div class="inp" style="left:180px;top:86px;width:117px;height:34px"></div>
  <div class="btn" style="left:179px;top:125px;width:207px;height:30px;border-radius:3px"></div>
  <svg class="chev" style="left:373px;top:139px" viewBox="0 0 9 5"><path d="M0.5 0.5 L4.5 4.5 L8.5 0.5" fill="none" stroke="#444" stroke-width="1"/></svg>
  <div class="abs" style="left:179px;top:176px;width:119px;height:33px;background:#f0f0f0;border:1px solid #f6f7f6"></div>
  <div class="inp" style="left:180px;top:226px;width:117px;height:34px"></div>
  <div class="btn" style="left:179px;top:265px;width:207px;height:30px;border-radius:3px"></div>
  <svg class="chev" style="left:373px;top:279px" viewBox="0 0 9 5"><path d="M0.5 0.5 L4.5 4.5 L8.5 0.5" fill="none" stroke="#444" stroke-width="1"/></svg>
  <div class="inp" style="left:180px;top:316px;width:117px;height:34px"></div>
  <div class="inp" style="left:180px;top:366px;width:117px;height:34px"></div>

  <div class="abs g" style="left:403px;top:35px;width:230px;height:24px;font-weight:normal;font-size:15.6px;line-height:23px;text-align:center">Total a pagar</div>
  <div class="abs" style="left:403px;top:59px;width:230px;height:46px;background:#000;color:#32cd32;font-size:32px;line-height:50px;text-align:right;padding-right:8px;white-space:nowrap">$ 2200,00</div>
  <div class="abs g" style="left:403px;top:111px;width:230px;height:24px;font-weight:normal;font-size:15.6px;line-height:23px;text-align:center">Total pagado</div>
  <div class="abs" style="left:403px;top:135px;width:230px;height:46px;background:#000;color:#32cd32;font-size:32px;line-height:50px;text-align:right;padding-right:8px;white-space:nowrap">$ 0,00</div>
  <div class="abs g" style="left:403px;top:187px;width:230px;height:24px;font-weight:normal;font-size:15.6px;line-height:23px;text-align:center">Saldo</div>
  <div class="abs" style="left:403px;top:211px;width:230px;height:46px;background:#000;color:#dc143c;font-size:32px;line-height:50px;text-align:right;padding-right:8px;white-space:nowrap">$ -2200,00</div>

  <div class="btn" style="left:11px;top:436px;width:118px;height:33px"></div><div class="t" style="left:11px;top:444px;width:119px;text-align:center;font-size:15.8px;line-height:18px">50</div>
  <div class="btn" style="left:137px;top:436px;width:118px;height:33px"></div><div class="t" style="left:137px;top:444px;width:119px;text-align:center;font-size:15.8px;line-height:18px">100</div>
  <div class="btn" style="left:263px;top:436px;width:118px;height:33px"></div><div class="t" style="left:263px;top:444px;width:119px;text-align:center;font-size:15.8px;line-height:18px">200</div>
  <div class="btn" style="left:389px;top:436px;width:118px;height:33px"></div><div class="t" style="left:389px;top:444px;width:119px;text-align:center;font-size:15.8px;line-height:18px">500</div>
  <div class="btn" style="left:515px;top:436px;width:118px;height:33px"></div><div class="t" style="left:515px;top:444px;width:119px;text-align:center;font-size:15.8px;line-height:18px">1000</div>
  <div class="abs" style="left:1px;top:486px;width:624px;height:1px;background:#a0a0a0"></div>
  <div class="btn" style="left:198px;top:501px;width:119px;height:38px"></div>
  <div class="t" style="left:198px;top:510px;width:119px;text-align:center;font-size:18px;line-height:22px;-webkit-text-stroke:.3px #000">Confirmar</div>
  <div class="btn" style="left:325px;top:501px;width:119px;height:38px"></div>
  <div class="t" style="left:325px;top:511px;width:119px;text-align:center;font-size:16px;line-height:20px">Cancelar</div>
</div>
</body>
</html>
